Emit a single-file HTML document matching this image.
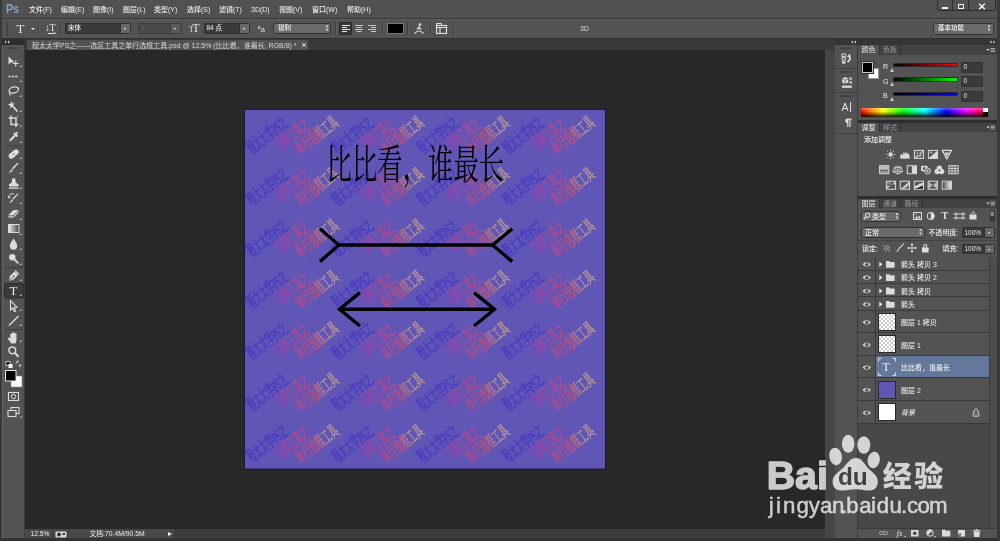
<!DOCTYPE html>
<html lang="zh-CN">
<head>
<meta charset="utf-8">
<title>程太太学PS之——选区工具之单行选框工具.psd</title>
<style>
*{box-sizing:border-box;margin:0;padding:0}
html,body{width:1000px;height:541px;overflow:hidden;background:#282828}
body{position:relative;font-family:"Liberation Sans","Noto Sans CJK SC",sans-serif;font-size:7px;color:#dcdcdc;line-height:1}
.abs{position:absolute}
.t{position:absolute;white-space:nowrap;line-height:1}
/* frame */
#frame{left:0;top:0;width:1000px;height:541px;background:#282828}
#menubar{left:0;top:0;width:1000px;height:19px;background:#515151;border-bottom:1px solid #383838}
#optbar{left:0;top:19px;width:1000px;height:20px;background:#535353;border-top:1px solid #5e5e5e;border-bottom:1px solid #303030}
#tabbar{left:25px;top:39px;width:810px;height:11px;background:#3a3a3a}
#doctab{left:27px;top:40px;width:281px;height:10px;background:#535353}
#toolhead{left:2px;top:39px;width:23px;height:6px;background:#2e2e2e}
#toolbar{left:2px;top:45px;width:23px;height:493px;background:#535353;border-left:1px solid #666;border-right:1px solid #3c3c3c}
#work{left:25px;top:50px;width:800px;height:480px;background:#282828}
#status{left:25px;top:529.3px;width:810px;height:8.7px;background:#484848}
#vscroll{left:824.5px;top:50px;width:10.5px;height:488px;background:#464646}
#bottomedge{left:0;top:538px;width:1000px;height:3px;background:#333}
#leftedge{left:0;top:0;width:2px;height:541px;background:#3a3a3a}
#rightedge{left:997px;top:0;width:3px;height:541px;background:#3a3a3a}
/* right dock */
#dockhead{left:835px;top:39px;width:162px;height:6px;background:#353535}
#iconstrip{left:835px;top:45px;width:23px;height:493px;background:#535353;border-right:1px solid #3a3a3a}
#panels{left:858px;top:45px;width:139px;height:493px;background:#535353}
.ptabs{position:absolute;left:858px;width:139px;height:10px;background:#424242}
.ptab{position:absolute;top:0;height:10px;font-size:7px;line-height:10px;text-align:center;color:#9a9a9a;border-right:1px solid #333}
.ptab.on{background:#535353;color:#e6e6e6}
.field{position:absolute;background:#3a3a3a;border:1px solid #333;border-radius:1px}
#canvas{left:244px;top:109px;width:362px;height:361px;background:#1c1a30}
.mi{top:6.3px;font-size:7px;color:#ececec;font-weight:500}
.sep{position:absolute;top:22px;width:1px;height:13px;background:#404040;border-right:1px solid #5e5e5e;box-sizing:content-box}
.dd{position:absolute;top:23px;height:11px;background:#3a3a3a;border:1px solid #2f2f2f;border-radius:1.5px}
.ddb{position:absolute;top:23px;height:11px;width:11px;background:#686868;border:1px solid #2f2f2f;border-radius:0 1.5px 1.5px 0}
.ddb:after{content:"";position:absolute;left:3.2px;top:4px;border:1.7px solid transparent;border-top:2.2px solid #f0f0f0;border-bottom:0}
.ot{position:absolute;white-space:nowrap;font-size:6.5px;color:#f0f0f0;top:25px;font-weight:500}
.pill{position:absolute;background:#6a6a6a;border:1px solid #333;border-radius:2.5px;height:11px}

.pt{position:absolute;white-space:nowrap;font-size:7px;color:#ececec;line-height:1;font-weight:500}
.gap{position:absolute;left:858px;width:139px;height:3px;background:#2e2e2e}
.lrow{position:absolute;left:858px;width:131px;background:#535353;border-bottom:1px solid #3a3a3a}
.eyecol{position:absolute;left:858px;width:18px;border-right:1px solid #3a3a3a}
.thumb{position:absolute;left:878px;width:18px;height:18px;border:1px solid #2a2a2a}
.chk{background-color:#fff;background-image:linear-gradient(45deg,#ccc 25%,transparent 25%,transparent 75%,#ccc 75%),linear-gradient(45deg,#ccc 25%,transparent 25%,transparent 75%,#ccc 75%);background-size:4px 4px;background-position:0 0,2px 2px}
</style>
</head>
<body>
<div id="root" style="position:absolute;left:0;top:0;width:1000px;height:541px;will-change:transform">
<div id="frame" class="abs"></div>
<div id="work" class="abs"></div>
<div id="menubar" class="abs"></div>
<div id="optbar" class="abs"></div>
<div id="tabbar" class="abs"></div>
<div id="doctab" class="abs"></div>
<div id="toolhead" class="abs"></div>
<div id="toolbar" class="abs"></div>
<div id="status" class="abs"></div>
<div id="dockhead" class="abs"></div>
<div id="iconstrip" class="abs"></div>
<div id="panels" class="abs"></div>
<svg class="abs" style="left:244px;top:109px" width="362" height="361" viewBox="244 109 362 361">
<defs>
<linearGradient id="wg2" gradientUnits="userSpaceOnUse" x1="0" y1="0" x2="60" y2="0"><stop offset="0" stop-color="#8a40b4"/><stop offset="1" stop-color="#c04888"/></linearGradient>
<linearGradient id="wg3" gradientUnits="userSpaceOnUse" x1="0" y1="0" x2="75" y2="0"><stop offset="0" stop-color="#b84a8c"/><stop offset="0.6" stop-color="#c65074"/><stop offset="1" stop-color="#c8a08c"/></linearGradient>
<g id="wmt" font-family="'Liberation Serif','Noto Serif CJK SC',serif" font-size="16.5" opacity="0.85" stroke-width="0.6">
<text transform="translate(7.5,44.5) rotate(-38.5) scale(0.465,1)" fill="#4436c4" stroke="#4436c4">程太太学PS之</text>
<text transform="translate(35.5,41) rotate(-38.5) scale(0.47,1)" fill="url(#wg2)" stroke="url(#wg2)">选择工具之</text>
<text transform="translate(56,45.5) rotate(-38.5) scale(0.5,1)" fill="url(#wg3)" stroke="url(#wg3)">单行选框工具</text>
</g>
<clipPath id="cvclip"><rect x="245" y="110" width="360" height="358.6"/></clipPath>
</defs>
<rect x="244" y="109" width="362" height="361" fill="#1b1838"/>
<rect x="245" y="110" width="360" height="358.6" fill="#6056b6"/>
<g clip-path="url(#cvclip)"><use href="#wmt" x="245.0" y="110.0"/><use href="#wmt" x="330.3" y="110.0"/><use href="#wmt" x="415.6" y="110.0"/><use href="#wmt" x="500.9" y="110.0"/><use href="#wmt" x="245.0" y="161.4"/><use href="#wmt" x="330.3" y="161.4"/><use href="#wmt" x="415.6" y="161.4"/><use href="#wmt" x="500.9" y="161.4"/><use href="#wmt" x="245.0" y="212.8"/><use href="#wmt" x="330.3" y="212.8"/><use href="#wmt" x="415.6" y="212.8"/><use href="#wmt" x="500.9" y="212.8"/><use href="#wmt" x="245.0" y="264.2"/><use href="#wmt" x="330.3" y="264.2"/><use href="#wmt" x="415.6" y="264.2"/><use href="#wmt" x="500.9" y="264.2"/><use href="#wmt" x="245.0" y="315.6"/><use href="#wmt" x="330.3" y="315.6"/><use href="#wmt" x="415.6" y="315.6"/><use href="#wmt" x="500.9" y="315.6"/><use href="#wmt" x="245.0" y="367.0"/><use href="#wmt" x="330.3" y="367.0"/><use href="#wmt" x="415.6" y="367.0"/><use href="#wmt" x="500.9" y="367.0"/><use href="#wmt" x="245.0" y="418.4"/><use href="#wmt" x="330.3" y="418.4"/><use href="#wmt" x="415.6" y="418.4"/><use href="#wmt" x="500.9" y="418.4"/></g>
<text transform="translate(326.6,179) scale(0.619,1)" font-family="'Liberation Serif','Noto Serif CJK SC',serif" font-size="41" fill="#000">比比看，谁最长</text>
<g stroke="#000" stroke-width="3.4" fill="none" stroke-linecap="butt" stroke-linejoin="miter">
<path d="M338.4 245H493"/>
<path d="M320 228.7L338.8 245L320 261.6"/>
<path d="M512.3 228.7L492.6 245L512.3 261.6"/>
<path d="M339.5 309.3H494.5"/>
<path d="M360 292.6L339.5 309.3L360 326"/>
<path d="M474 292.6L494.5 309.3L474 326"/>
</g>
</svg>
<!--CANVAS-->
<div class="t" style="left:6px;top:2.2px;font-size:13px;font-weight:bold;color:#7fa3cf;letter-spacing:0;transform:scaleX(.82);transform-origin:0 0">Ps</div>
<div class="t mi" style="left:29px">文件(F)</div>
<div class="t mi" style="left:61px">编辑(E)</div>
<div class="t mi" style="left:93px">图像(I)</div>
<div class="t mi" style="left:123px">图层(L)</div>
<div class="t mi" style="left:154px">类型(Y)</div>
<div class="t mi" style="left:187px">选择(S)</div>
<div class="t mi" style="left:219px">滤镜(T)</div>
<div class="t mi" style="left:251px">3D(D)</div>
<div class="t mi" style="left:279px">视图(V)</div>
<div class="t mi" style="left:312px">窗口(W)</div>
<div class="t mi" style="left:347px">帮助(H)</div>
<div class="abs" style="left:936.5px;top:-1px;width:59px;height:11.5px;background:#525252;border:1px solid #2c2c2c;border-radius:0 0 2px 2px"></div>
<div class="abs" style="left:952px;top:0;width:1px;height:10px;background:#2c2c2c"></div><div class="abs" style="left:968px;top:0;width:1px;height:10px;background:#2c2c2c"></div>
<div class="abs" style="left:941.5px;top:7px;width:6px;height:1.6px;background:#eee"></div>
<div class="abs" style="left:957.5px;top:3.8px;width:6.4px;height:5px;border:1.2px solid #eee;border-top-width:1.8px"></div>
<svg class="abs" style="left:978px;top:2.5px" width="8" height="7" viewBox="0 0 8 7"><path d="M1.2 0.7L6.8 6.3M6.8 0.7L1.2 6.3" stroke="#f0f0f0" stroke-width="1.5"/></svg>
<!--MENU-->
<div class="abs" style="left:6px;top:22px;width:2px;height:14px;background:#444"></div>
<div class="t" style="left:16.5px;top:21.5px;font-family:'Liberation Serif',serif;font-size:13px;color:#e4e4e4">T</div>
<div class="abs" style="left:31px;top:28px;border:2px solid transparent;border-top:2.5px solid #e8e8e8;border-bottom:0"></div>
<div class="sep" style="left:38px"></div>
<div class="t" style="left:45px;top:23px;font-family:'Liberation Serif',serif;font-size:10px;color:#e4e4e4;letter-spacing:-0.5px">↓T</div>
<div class="abs" style="left:48px;top:33px;width:7px;height:1px;background:#ddd"></div>
<div class="abs" style="left:54px;top:32px;border:1.5px solid transparent;border-left:2px solid #ddd;border-right:0"></div>
<div class="sep" style="left:60px"></div>
<div class="dd" style="left:65px;width:56px"></div><div class="ddb" style="left:120px"></div>
<div class="ot" style="left:68px">宋体</div>
<div class="dd" style="left:138px;width:33px;background:#4a4a4a;border-color:#3c3c3c"></div><div class="ddb" style="left:170px;background:#5c5c5c;border-color:#3c3c3c"></div>
<div class="ot" style="left:142px;color:#999">-</div>
<div class="t" style="left:189px;top:22.5px;font-family:'Liberation Serif',serif;font-size:11.5px;color:#e4e4e4;letter-spacing:-1.2px"><span style="font-size:7.5px">T</span>T</div>
<div class="dd" style="left:204px;width:36px"></div><div class="ddb" style="left:239px"></div>
<div class="ot" style="left:206.5px">84 点</div>
<div class="t" style="left:257.5px;top:24.5px;font-size:8px;color:#ddd"><span style="font-size:5.5px;vertical-align:2.5px">a</span>a</div>
<div class="pill" style="left:273px;top:23px;width:58px"></div>
<div class="ot" style="left:278px">锐利</div>
<div class="t" style="left:325px;top:24px;font-size:4px;color:#eee;line-height:4px">▲<br>▼</div>
<div class="sep" style="left:335px"></div>
<div class="abs" style="left:339px;top:22px;width:13px;height:13px;background:#383838;border:1px solid #2a2a2a;border-radius:1px"></div>
<svg class="abs" style="left:340px;top:23px" width="40" height="11" viewBox="0 0 40 11"><g stroke="#e0e0e0" stroke-width="1"><path d="M2 2.5H10M2 4.5H7M2 6.5H10M2 8.5H7"/><g stroke="#c8c8c8"><path d="M15 2.5H23M16.5 4.5H21.5M15 6.5H23M16.5 8.5H21.5"/><path d="M28 2.5H36M31 4.5H36M28 6.5H36M31 8.5H36"/></g></g></svg>
<div class="sep" style="left:382px"></div>
<div class="abs" style="left:387px;top:23px;width:17px;height:11px;background:#000;border:1px solid #777"></div>
<div class="sep" style="left:407px"></div>
<svg class="abs" style="left:413px;top:22px" width="12" height="13" viewBox="0 0 12 13"><path d="M1.5 11.5Q6 6.5 10.5 11.5" stroke="#ddd" fill="none" stroke-width="1.2"/><path d="M4 8L6 4L8 8M5 6.5H7.5" stroke="#ddd" fill="none" stroke-width="1"/><circle cx="7" cy="2.5" r="1.3" fill="#ddd"/></svg>
<div class="sep" style="left:430px"></div>
<svg class="abs" style="left:436px;top:23px" width="12" height="11" viewBox="0 0 12 11"><path d="M0.5 2.5V0.5H5.5V2.5" stroke="#ddd" fill="none"/><rect x="0.5" y="2.5" width="10" height="8" fill="none" stroke="#ddd" stroke-width="1.2"/><path d="M1 4.5H10.5M4 4.5V10" stroke="#ddd" stroke-width="1.2"/></svg>
<div class="sep" style="left:453px"></div>
<div class="t" style="left:580px;top:25px;font-size:7px;color:#ddd">3D</div>
<div class="pill" style="left:933px;top:23px;width:60.8px;height:11.6px"></div>
<div class="ot" style="left:938px">基本功能</div>
<div class="t" style="left:987px;top:24px;font-size:4px;color:#eee;line-height:4px">▲<br>▼</div>
<!--OPTIONS-->
<div class="t" style="left:32px;top:41.5px;font-size:7px;color:#d4d4d4">程太太学PS之——选区工具之单行选框工具.psd @ 12.5% (比比看，谁最长, RGB/8) *</div>
<svg class="abs" style="left:301px;top:42px" width="6" height="6" viewBox="0 0 6 6"><path d="M1 1L5 5M5 1L1 5" stroke="#ddd" stroke-width="1"/></svg>
<svg class="abs" style="left:0;top:0" width="26" height="541" viewBox="0 0 26 541">
<path d="M5 40.5L7 42L5 43.5ZM8 40.5L10 42L8 43.5Z" fill="#ccc"/>
<rect x="8" y="47.5" width="11" height="1.2" fill="#3c3c3c"/>
<g fill="#dcdcdc" stroke="none">
<!-- move -->
<path d="M8.5 56.5L8.5 64.5L10.6 62.6L14.5 62.2Z"/>
<path d="M15.7 60.5V66.5M12.7 63.5H18.7" stroke="#dcdcdc" stroke-width="1.2" fill="none"/>
<!-- marquee -->
<path d="M8.5 76.5H18.5" stroke="#dcdcdc" stroke-width="1.6" stroke-dasharray="2.2 1.2" fill="none"/>
<!-- lasso -->
<ellipse cx="13.8" cy="90" rx="4.8" ry="3" fill="none" stroke="#dcdcdc" stroke-width="1.3" transform="rotate(-15 13.8 90)"/>
<path d="M10 92.5Q9 94 10.5 95.5" stroke="#dcdcdc" stroke-width="1.1" fill="none"/>
<!-- wand -->
<path d="M12 105.5L17.5 111.5" stroke="#dcdcdc" stroke-width="1.8"/>
<path d="M11.5 101L12.3 103.6L15 103.2L13 105L14.5 107.5L12 106.3L10.2 108.5L10.2 105.8L7.8 104.6L10.4 103.8Z"/>
<!-- crop -->
<path d="M11 115.5V124.5H18.5M8.5 118H16V127" stroke="#dcdcdc" stroke-width="1.5" fill="none"/>
<path d="M16.5 117.5L18.5 115.5" stroke="#dcdcdc" stroke-width="0.8"/>
<!-- eyedropper -->
<path d="M9 141.5L10 139L14.5 134.5L16 136L11.5 140.5Z"/>
<path d="M14 133L17.5 136.5M15.5 134.5L17.5 132.2" stroke="#dcdcdc" stroke-width="1.8"/>
<!-- sep -->
<rect x="5" y="145.5" width="18" height="1" fill="#3e3e3e"/>
<!-- healing -->
<rect x="8" y="151.3" width="11.5" height="5.4" rx="2.7" transform="rotate(-40 13.7 154)"/>
<circle cx="13.7" cy="154" r="0.7" fill="#535353"/>
<!-- brush -->
<path d="M18.5 163.5L13 169.5L11.8 168.3L17.5 162.8Z"/>
<path d="M11.5 169L12.8 170.3Q11.5 173 8.5 173Q10.5 171.5 11.5 169Z"/>
<!-- stamp -->
<path d="M12 178.5H15.5V182L17.5 184H18.5V186.5H9V184H10L12 182Z"/>
<rect x="9" y="187.5" width="9.5" height="1.3"/>
<!-- history brush -->
<path d="M18.5 194L13.5 199.5L12.5 198.5L17.8 193.3Z"/>
<path d="M12 199L13.2 200.2Q12 203 9 203Q11 201.5 12 199Z"/>
<path d="M9 197.5A3.2 3.2 0 0 1 14 194.3" stroke="#dcdcdc" stroke-width="1" fill="none"/>
<path d="M7.6 196.5L9 198.8L10.6 196.7Z"/>
<!-- eraser -->
<path d="M8.5 215L13.5 210H18.5L13.5 215Z"/>
<path d="M8.5 215.6H13.5V217.8H8.5ZM14 215.3L18.7 210.6V212.8L14 217.6Z" fill="#bdbdbd"/>
<!-- gradient -->
<rect x="8.5" y="224.5" width="10.5" height="8" fill="url(#tg)" stroke="#dcdcdc" stroke-width="1"/>
<!-- blur drop -->
<path d="M13.5 238.5Q17.5 244 17.2 246A3.7 3.7 0 0 1 9.8 246Q9.5 244 13.5 238.5Z"/>
<!-- dodge -->
<circle cx="12.3" cy="257.3" r="3.2"/>
<path d="M14.5 259.5L18.3 263.3" stroke="#dcdcdc" stroke-width="1.8"/>
<rect x="5" y="267" width="18" height="1" fill="#3e3e3e"/>
<!-- pen -->
<path d="M9 281L10 276L14.5 271.5L18 275L13.5 279.5Z"/>
<path d="M9.3 280.7L13.3 276.7" stroke="#535353" stroke-width="0.8"/>
<circle cx="13.6" cy="276.2" r="0.9" fill="#535353"/>
<path d="M15 270.5L19 274.5" stroke="#dcdcdc" stroke-width="1.3"/>
<!-- type active -->
<rect x="4.5" y="283.5" width="19" height="14.5" rx="1.5" fill="#3a3a3a" stroke="#2c2c2c" stroke-width="1"/>
<!-- path select -->
<path d="M10.5 300.5V310L12.7 308L14.3 311.5L15.7 310.9L14.2 307.5L17 307.3Z" fill="none" stroke="#dcdcdc" stroke-width="1.1"/>
<!-- line -->
<path d="M9 325.5L18.5 316" stroke="#dcdcdc" stroke-width="1.4"/>
<rect x="5" y="329" width="18" height="1" fill="#3e3e3e"/>
<!-- hand -->
<path d="M10.2 338V334.5Q10.2 333.6 11 333.6Q11.7 333.6 11.7 334.5V333.4Q11.7 332.5 12.5 332.5Q13.3 332.5 13.3 333.4V333Q13.3 332.2 14.1 332.2Q14.9 332.2 14.9 333.2V334Q14.9 333.2 15.7 333.2Q16.5 333.2 16.5 334.2V339Q16.5 341.5 15.5 343.5H11Q10.5 342 9 340.5L7.8 338.6Q7.5 337.6 8.4 337.4Q9.2 337.3 10.2 338.6Z"/>
<!-- zoom -->
<circle cx="12.3" cy="350.3" r="3.4" fill="none" stroke="#dcdcdc" stroke-width="1.5"/>
<path d="M14.8 352.8L18.5 356.7" stroke="#dcdcdc" stroke-width="2"/>
<!-- default colors / swap -->
<rect x="6" y="361.5" width="4" height="4" fill="#111" stroke="#dcdcdc" stroke-width="0.8"/>
<rect x="8.5" y="364" width="4" height="4" fill="#fff"/>
<path d="M16 363.5Q16 361.5 18.5 361.5M18.5 361.5L17.3 360.3M18.5 361.5L17.3 362.7M20 364V366.5M20 366.5L19 365.3M20 366.5L21 365.3" stroke="#dcdcdc" stroke-width="0.9" fill="none"/>
<!-- fg/bg -->
<rect x="11" y="376" width="11" height="11" fill="#fff" stroke="#888" stroke-width="0.6"/>
<rect x="5.5" y="370.5" width="10.5" height="10.5" fill="#000" stroke="#e8e8e8" stroke-width="1"/>
<!-- quick mask -->
<rect x="8.5" y="392.5" width="10" height="8" fill="none" stroke="#dcdcdc" stroke-width="1.1"/>
<circle cx="13.5" cy="396.5" r="2.2" fill="none" stroke="#dcdcdc" stroke-width="1"/>
<!-- screen mode -->
<rect x="11" y="407.5" width="8" height="6" fill="none" stroke="#dcdcdc" stroke-width="1.1"/>
<rect x="8" y="410.5" width="8" height="6" fill="#535353" stroke="#dcdcdc" stroke-width="1.1"/>
</g>
<g fill="#cfcfcf"><path d="M21.5 67V65L19.5 67Z"/><path d="M21.5 82V80L19.5 82Z"/><path d="M21.5 97V95L19.5 97Z"/><path d="M21.5 112V110L19.5 112Z"/><path d="M21.5 127V125L19.5 127Z"/><path d="M21.5 143V141L19.5 143Z"/><path d="M21.5 159V157L19.5 159Z"/><path d="M21.5 174V172L19.5 174Z"/><path d="M21.5 189V187L19.5 189Z"/><path d="M21.5 204V202L19.5 204Z"/><path d="M21.5 220V218L19.5 220Z"/><path d="M21.5 235V233L19.5 235Z"/><path d="M21.5 250V248L19.5 250Z"/><path d="M21.5 265V263L19.5 265Z"/><path d="M21.5 281V279L19.5 281Z"/><path d="M21.5 296V294L19.5 296Z"/><path d="M21.5 311V309L19.5 311Z"/><path d="M21.5 326V324L19.5 326Z"/><path d="M21.5 342V340L19.5 342Z"/><path d="M21.5 418V416L19.5 418Z"/></g>
<defs><linearGradient id="tg" x1="0" y1="0" x2="1" y2="0"><stop offset="0" stop-color="#eee"/><stop offset="1" stop-color="#444"/></linearGradient></defs>
</svg>
<div class="t" style="left:9.5px;top:284px;font-family:'Liberation Serif',serif;font-size:13px;color:#e6e6e6">T</div>
<!--TOOLS-->
<svg class="abs" style="left:835px;top:39px" width="162" height="6" viewBox="835 39 162 6"><path d="M853 40.5L851 42L853 43.5ZM856 40.5L854 42L856 43.5ZM990.3 40.5L992.3 42L990.3 43.5ZM993.3 40.5L995.3 42L993.3 43.5Z" fill="#ccc"/></svg>
<!-- icon strip -->
<svg class="abs" style="left:835px;top:45px" width="23" height="100" viewBox="835 45 23 100">
<g fill="#dcdcdc">
<rect x="840" y="47.5" width="12" height="1.2" fill="#3c3c3c"/>
<rect x="842" y="54" width="3.4" height="2.4" fill="none" stroke="#dcdcdc" stroke-width="0.9"/><rect x="842" y="57.6" width="3.4" height="2.4" fill="none" stroke="#dcdcdc" stroke-width="0.9"/><rect x="842" y="61.2" width="3.4" height="2.4"/>
<path d="M847.5 62Q852 59 848.5 55.5" fill="none" stroke="#dcdcdc" stroke-width="1.8"/><path d="M846.5 56.5L850.5 53.8L850 57.5Z"/>
<rect x="835" y="68" width="22" height="1" fill="#3e3e3e"/>
<rect x="840" y="71.5" width="12" height="1.2" fill="#3c3c3c"/>
<path d="M845.2 77L848.3 78.5V82.5L845.2 84L842.2 82.5V78.5Z"/><path d="M845.2 80.2V84M842.4 78.7L845.2 80.2L848.1 78.7" stroke="#535353" stroke-width="0.7" fill="none"/>
<rect x="849.6" y="77.5" width="2.2" height="2.2"/><rect x="849.6" y="81.3" width="2.2" height="2.2"/><rect x="842" y="85.6" width="9.8" height="2.2"/>
<rect x="835" y="92" width="22" height="1" fill="#3e3e3e"/>
<rect x="840" y="95.5" width="12" height="1.2" fill="#3c3c3c"/>
<rect x="835" y="133" width="22" height="1" fill="#3e3e3e"/>
<path d="M847 118.5H851.5V119.8H850.6V127H849.4V119.8H848.4V127H847.2V123.2A2.4 2.4 0 0 1 847 118.5Z"/>
</g></svg>
<div class="t" style="left:841.5px;top:102px;font-size:10.5px;color:#e4e4e4">A</div>
<div class="abs" style="left:849.5px;top:102px;width:1px;height:10px;background:#ddd"></div>
<div class="ptabs" style="top:45px"><div class="ptab on" style="left:0;width:22px">颜色</div><div class="ptab" style="left:22px;width:21px">色板</div></div>
<div class="abs" style="left:867.5px;top:68px;width:11px;height:11px;background:#fff;border:1px solid #999"></div>
<div class="abs" style="left:861.5px;top:62px;width:11px;height:11px;background:#000;border:1px solid #c8c8c8;outline:1px solid #333"></div>
<div class="pt" style="left:883px;top:63.0px;font-size:7px">R</div>
<div class="abs" style="left:892.5px;top:62.5px;width:65.5px;height:4.5px;background:linear-gradient(90deg,#000,#f00);border:1px solid #2a2a2a;border-radius:1px"></div>
<div class="abs" style="left:890.5px;top:68.0px;border:2.8px solid transparent;border-bottom:4px solid #c8c8c8;border-top:0;margin-left:-0.3px;margin-top:-0.5px"></div>
<div class="field" style="left:961px;top:61.5px;width:22px;height:11px"></div>
<div class="pt" style="left:963.5px;top:63.5px;font-size:6.5px">0</div>
<div class="pt" style="left:883px;top:77.5px;font-size:7px">G</div>
<div class="abs" style="left:892.5px;top:77px;width:65.5px;height:4.5px;background:linear-gradient(90deg,#000,#0f0);border:1px solid #2a2a2a;border-radius:1px"></div>
<div class="abs" style="left:890.5px;top:82.5px;border:2.8px solid transparent;border-bottom:4px solid #c8c8c8;border-top:0;margin-left:-0.3px;margin-top:-0.5px"></div>
<div class="field" style="left:961px;top:76px;width:22px;height:11px"></div>
<div class="pt" style="left:963.5px;top:78px;font-size:6.5px">0</div>
<div class="pt" style="left:883px;top:92.0px;font-size:7px">B</div>
<div class="abs" style="left:892.5px;top:91.5px;width:65.5px;height:4.5px;background:linear-gradient(90deg,#000,#00f);border:1px solid #2a2a2a;border-radius:1px"></div>
<div class="abs" style="left:890.5px;top:97.0px;border:2.8px solid transparent;border-bottom:4px solid #c8c8c8;border-top:0;margin-left:-0.3px;margin-top:-0.5px"></div>
<div class="field" style="left:961px;top:90.5px;width:22px;height:11px"></div>
<div class="pt" style="left:963.5px;top:92.5px;font-size:6.5px">0</div>
<div class="abs" style="left:861px;top:108px;width:126.5px;height:8.5px;background:linear-gradient(180deg,rgba(255,255,255,.35) 0,rgba(255,255,255,0) 35%,rgba(0,0,0,0) 40%,rgba(0,0,0,.9) 100%),linear-gradient(90deg,#f00 0,#ff0 17%,#0f0 33%,#0ff 50%,#00f 67%,#f0f 83%,#f00 100%)"></div>
<div class="abs" style="left:982.5px;top:108px;width:5px;height:4.3px;background:#fff"></div><div class="abs" style="left:982.5px;top:112.3px;width:5px;height:4.2px;background:#000"></div>
<div class="gap" style="top:120px"></div>
<div class="ptabs" style="top:123px;height:9px"><div class="ptab on" style="left:0;width:22px;height:9px;line-height:9px">调整</div><div class="ptab" style="left:22px;width:21px;height:9px;line-height:9px">样式</div></div>
<div class="pt" style="left:864px;top:136px;font-size:7px">添加调整</div>
<div class="gap" style="top:196px"></div>
<div class="ptabs" style="top:199px;height:9px"><div class="ptab on" style="left:0;width:22px;height:9px;line-height:9px">图层</div><div class="ptab" style="left:22px;width:21px;height:9px;line-height:9px">通道</div><div class="ptab" style="left:43px;width:22px;height:9px;line-height:9px">路径</div></div>
<svg class="abs" style="left:858px;top:45px" width="139" height="170" viewBox="858 45 139 170"><path d="M986.5 49H989.5L988 51Z" fill="#ddd"/><path d="M990.5 48.5H995M990.5 50H995M990.5 51.5H995" stroke="#bbb" stroke-width="0.8"/><path d="M986.5 126.5H989.5L988 128.5Z" fill="#ddd"/><path d="M990.5 126.0H995M990.5 127.5H995M990.5 129.0H995" stroke="#bbb" stroke-width="0.8"/><path d="M986.5 202.5H989.5L988 204.5Z" fill="#ddd"/><path d="M990.5 202.0H995M990.5 203.5H995M990.5 205.0H995" stroke="#bbb" stroke-width="0.8"/></svg>
<svg class="abs" style="left:858px;top:145px" width="139" height="50" viewBox="858 145 139 50"><defs><linearGradient id="gm" x1="0" y1="0" x2="1" y2="0"><stop offset="0" stop-color="#555"/><stop offset="1" stop-color="#eee"/></linearGradient></defs><circle cx="890.6" cy="154.4" r="2.2" fill="#dcdcdc"/><path d="M893.8 154.4L895.4 154.4" stroke="#dcdcdc" stroke-width="0.9"/><path d="M892.9 156.7L894.0 157.8" stroke="#dcdcdc" stroke-width="0.9"/><path d="M890.6 157.6L890.6 159.2" stroke="#dcdcdc" stroke-width="0.9"/><path d="M888.3 156.7L887.2 157.8" stroke="#dcdcdc" stroke-width="0.9"/><path d="M887.4 154.4L885.8 154.4" stroke="#dcdcdc" stroke-width="0.9"/><path d="M888.3 152.1L887.2 151.0" stroke="#dcdcdc" stroke-width="0.9"/><path d="M890.6 151.2L890.6 149.6" stroke="#dcdcdc" stroke-width="0.9"/><path d="M892.9 152.1L894.0 151.0" stroke="#dcdcdc" stroke-width="0.9"/><path d="M900.3 157.9V155.4L901.8 153.4L902.8 155.4L903.8 151.4L904.8 154.4L905.8 150.9L906.8 154.4L907.8 152.4L909.5 155.4V157.9Z" fill="#dcdcdc"/><rect x="900.3" y="157.4" width="9.2" height="1.2" fill="#dcdcdc"/><rect x="914.4" y="150.4" width="9.2" height="8" fill="none" stroke="#dcdcdc" stroke-width="1"/><path d="M914.9 157.9Q919.4 157.4 923.1 150.9" fill="none" stroke="#dcdcdc" stroke-width="1"/><path d="M917.4 150.4V158.4M920.4 150.4V158.4M914.4 153.1H923.4M914.4 155.70000000000002H923.4" stroke="#dcdcdc" stroke-width="0.4"/><rect x="928.4" y="150.4" width="9.2" height="8" fill="none" stroke="#dcdcdc" stroke-width="1"/><path d="M928.9 157.9L937.1 150.9V157.9Z" fill="#dcdcdc"/><path d="M929.9 152.4H932.4M931.1 151.20000000000002V153.6" stroke="#dcdcdc" stroke-width="0.7"/><path d="M942.1999999999999 150.4H951.4L946.8 158.9Z" fill="none" stroke="#dcdcdc" stroke-width="1.2"/><path d="M944.4999999999999 152.4H949.0999999999999L946.8 156.4Z" fill="#dcdcdc"/><rect x="879.6" y="165.7" width="9.2" height="8" fill="none" stroke="#dcdcdc" stroke-width="1"/><rect x="880.1" y="166.2" width="8.2" height="3.5" fill="#dcdcdc" opacity=".8"/><rect x="880.1" y="170.7" width="8.2" height="2.5" fill="#dcdcdc" opacity=".5"/><path d="M897.8 165.7V173.2M894.1999999999999 167.2H901.4M895.6999999999999 173.7H899.9" stroke="#dcdcdc" stroke-width="1"/><path d="M894.6999999999999 167.2L892.9 171.7H896.4999999999999Z M900.9 167.2L899.0999999999999 171.7H902.6999999999999Z" fill="none" stroke="#dcdcdc" stroke-width="0.8"/><path d="M892.9 171.7Q894.6999999999999 173.7 896.4999999999999 171.7ZM899.0999999999999 171.7Q900.9 173.7 902.6999999999999 171.7Z" fill="#dcdcdc"/><rect x="907.3" y="165.7" width="9.2" height="8" fill="none" stroke="#dcdcdc" stroke-width="1"/><rect x="911.9" y="166.2" width="4.1" height="7" fill="#dcdcdc"/><rect x="921.1" y="165.7" width="6.5" height="5.5" rx="0.8" fill="#dcdcdc"/><circle cx="924.3000000000001" cy="168.6" r="1.5" fill="#535353"/><circle cx="927.6" cy="171.0" r="2.9" fill="#535353" stroke="#dcdcdc" stroke-width="1"/><circle cx="927.6" cy="171.0" r="1.2" fill="#dcdcdc"/><circle cx="939.4" cy="168.1" r="2.7" fill="#dcdcdc"/><circle cx="937.1999999999999" cy="171.5" r="2.7" fill="#dcdcdc"/><circle cx="941.6" cy="171.5" r="2.7" fill="#dcdcdc"/><circle cx="939.4" cy="170.29999999999998" r="1" fill="#535353"/><rect x="948.9" y="165.7" width="9.2" height="8" fill="none" stroke="#dcdcdc" stroke-width="1"/><path d="M952.0 165.7V173.7M955.0 165.7V173.7M948.9 168.39999999999998H958.1M948.9 171.0H958.1" stroke="#dcdcdc" stroke-width="0.9"/><rect x="886.4" y="181.2" width="9.2" height="8" fill="none" stroke="#dcdcdc" stroke-width="1"/><path d="M886.9 188.7V186.2Q889.4 186.2 891.0 185.2T895.1 181.7V184.2Q892.4 184.2 891.0 185.2T886.9 188.7Z" fill="#dcdcdc"/><rect x="886.9" y="181.7" width="4" height="3" fill="#dcdcdc" opacity=".35"/><rect x="900.3" y="181.2" width="9.2" height="8" fill="none" stroke="#dcdcdc" stroke-width="1"/><path d="M900.8 188.7L909.0 181.7V185.2L904.3 188.7Z" fill="#dcdcdc" opacity=".85"/><rect x="914.3" y="181.2" width="9.2" height="8" fill="none" stroke="#dcdcdc" stroke-width="1"/><path d="M914.8 188.7V186.2L917.3 185.2L919.3 183.7L923.0 182.7V185.2L920.3 186.2L918.3 187.7Z" fill="#dcdcdc"/><path d="M914.8 188.7H923.0V186.2Z" fill="#222"/><rect x="928.1999999999999" y="181.2" width="9.2" height="8" fill="none" stroke="#dcdcdc" stroke-width="1"/><path d="M928.6999999999999 181.7L932.8 185.2L928.6999999999999 188.7ZM936.9 181.7L932.8 185.2L936.9 188.7Z" fill="#dcdcdc" opacity=".75"/><rect x="942.1999999999999" y="181.2" width="9.2" height="8" fill="none" stroke="#dcdcdc" stroke-width="1"/><rect x="942.6999999999999" y="181.7" width="8.2" height="7" fill="url(#gm)"/></svg>
<div class="pill" style="left:861px;top:210.5px;width:40px;height:11px"></div>
<svg class="abs" style="left:863px;top:212px" width="8" height="8" viewBox="0 0 8 8"><circle cx="4.6" cy="3.2" r="2.2" fill="none" stroke="#eee" stroke-width="1"/><path d="M3 4.8L0.8 7.2" stroke="#eee" stroke-width="1.2"/></svg>
<div class="pt" style="left:872px;top:212.5px;font-size:7px">类型</div>
<div class="t" style="left:895px;top:211.5px;font-size:4px;color:#eee;line-height:4px">▲<br>▼</div>
<div class="pill" style="left:861px;top:227px;width:63.5px;height:10.5px"></div>
<div class="pt" style="left:865px;top:228.5px;font-size:7px">正常</div>
<div class="t" style="left:918.5px;top:228px;font-size:4px;color:#eee;line-height:4px">▲<br>▼</div>
<div class="pt" style="left:928.5px;top:228.5px;font-size:7px">不透明度:</div>
<div class="field" style="left:962px;top:227px;width:22px;height:10.5px"></div>
<div class="pt" style="left:964.5px;top:229.8px;font-size:6.5px">100%</div>
<div class="ddb" style="left:983.5px;top:227px;height:10.5px;width:11px"></div>
<div class="abs" style="left:858px;top:240px;width:139px;height:1px;background:#434343"></div>
<div class="pt" style="left:862px;top:245px;font-size:7px">锁定:</div>
<div class="pt" style="left:942.5px;top:245px;font-size:7px">填充:</div>
<div class="field" style="left:962px;top:243.5px;width:22px;height:10.5px"></div>
<div class="pt" style="left:964.5px;top:246px;font-size:6.5px">100%</div>
<div class="ddb" style="left:983.5px;top:243.5px;height:10.5px;width:11px"></div>
<svg class="abs" style="left:858px;top:208px" width="139" height="48" viewBox="858 208 139 48"><g fill="#dcdcdc">
<rect x="913.5" y="212.5" width="8" height="7" fill="none" stroke="#dcdcdc" stroke-width="1"/><path d="M914.5 218.5L916.5 216L918 217.5L919.5 215.5L920.5 218.5Z"/><circle cx="916" cy="214.5" r="0.7"/>
<circle cx="930.7" cy="216" r="3.6" fill="none" stroke="#dcdcdc" stroke-width="1"/><path d="M930.7 212.4A3.6 3.6 0 0 1 930.7 219.6Z"/>
<path d="M959 212.5V219.5M966 212.5V219.5M956.5 214H968.5M956.5 218H968.5" transform="translate(-3,0)" stroke="#dcdcdc" stroke-width="1" fill="none"/>
<path d="M969.5 219.5V214.5H971.5V213A1.8 1.8 0 0 1 975 213V214.5H976.5V219.5Z"/><rect x="972.3" y="212.3" width="2" height="2.4" fill="#535353"/>
<rect x="990" y="211.5" width="4.5" height="9.5" rx="1" fill="#3a3a3a" stroke="#2c2c2c" stroke-width="0.6"/><rect x="990.6" y="212" width="3.3" height="4" fill="#8a8a8a"/>
<g fill="#9a9a9a"><rect x="883.5" y="245" width="1.6" height="1.6"/><rect x="886.7" y="245" width="1.6" height="1.6"/><rect x="885.1" y="246.6" width="1.6" height="1.6"/><rect x="888.3" y="246.6" width="1.6" height="1.6"/><rect x="883.5" y="248.2" width="1.6" height="1.6"/><rect x="886.7" y="248.2" width="1.6" height="1.6"/><rect x="885.1" y="249.8" width="1.6" height="1.6"/><rect x="888.3" y="249.8" width="1.6" height="1.6"/></g>
<path d="M904.5 243.5L899.5 249L898.6 248.2L903.8 243Z"/><path d="M898.3 248.6L899.3 249.6Q898.3 251.8 896 252Q897.6 250.6 898.3 248.6Z"/>
<path d="M912 244V252M908 248H916" stroke="#dcdcdc" stroke-width="1" fill="none"/><path d="M912 243L913.5 245H910.5ZM912 253L913.5 251H910.5ZM907 248L909 246.5V249.5ZM917 248L915 246.5V249.5Z"/>
<path d="M922 252.5V247.5H923.3V246A2 2 0 0 1 927.3 246V247.5H928.6V252.5Z"/><rect x="924.4" y="245.2" width="1.8" height="2.4" fill="#535353"/>
</g></svg>
<div class="t" style="left:941.5px;top:211px;font-family:'Liberation Serif',serif;font-weight:bold;font-size:10px;color:#e2e2e2">T</div>
<div class="abs" style="left:858px;top:256.5px;width:131px;height:271.5px;background:#484848;border-top:1px solid #3a3a3a"></div>
<div class="abs" style="left:989px;top:256.5px;width:8px;height:271.5px;background:#4d4d4d;border-left:1px solid #3c3c3c"></div>
<div class="lrow" style="top:257.2px;height:13.35px;background:#535353"></div><div class="eyecol" style="top:257.2px;height:12.35px;background:#535353"></div>
<div class="pt" style="left:901px;top:260.9px">箭头 拷贝 3</div>
<div class="lrow" style="top:270.55px;height:13.35px;background:#535353"></div><div class="eyecol" style="top:270.55px;height:12.35px;background:#535353"></div>
<div class="pt" style="left:901px;top:274.2px">箭头 拷贝 2</div>
<div class="lrow" style="top:283.9px;height:13.35px;background:#535353"></div><div class="eyecol" style="top:283.9px;height:12.35px;background:#535353"></div>
<div class="pt" style="left:901px;top:287.6px">箭头 拷贝</div>
<div class="lrow" style="top:297.25px;height:13.35px;background:#535353"></div><div class="eyecol" style="top:297.25px;height:12.35px;background:#535353"></div>
<div class="pt" style="left:901px;top:300.9px">箭头</div>
<div class="lrow" style="top:310.6px;height:22.60px;background:#535353"></div><div class="eyecol" style="top:310.6px;height:21.60px;background:#535353"></div>
<div class="thumb chk" style="top:312.7px"></div><div class="pt" style="left:901px;top:318.9px;font-size:7px">图层 1 拷贝</div>
<div class="lrow" style="top:333.2px;height:22.60px;background:#535353"></div><div class="eyecol" style="top:333.2px;height:21.60px;background:#535353"></div>
<div class="thumb chk" style="top:335.3px"></div><div class="pt" style="left:901px;top:341.5px;font-size:7px">图层 1</div>
<div class="lrow" style="top:355.8px;height:22.60px;background:#63789a"></div><div class="eyecol" style="top:355.8px;height:21.60px;background:#535353"></div>
<div class="t" style="left:882.5px;top:361.4px;font-family:'Liberation Serif',serif;font-size:12px;color:#f0f0f0">T</div><div class="pt" style="left:901px;top:364.1px;font-size:7px">比比看，谁最长</div>
<div class="lrow" style="top:378.4px;height:22.60px;background:#535353"></div><div class="eyecol" style="top:378.4px;height:21.60px;background:#535353"></div>
<div class="thumb" style="top:380.5px;background:#6056b6"></div><div class="pt" style="left:901px;top:386.7px;font-size:7px">图层 2</div>
<div class="lrow" style="top:401.0px;height:22.60px;background:#535353"></div><div class="eyecol" style="top:401.0px;height:21.60px;background:#535353"></div>
<div class="thumb" style="top:403.1px;background:#fff"></div><div class="pt" style="left:901px;top:409.3px;font-style:italic;font-size:7px">背景</div>
<svg class="abs" style="left:858px;top:256px" width="139" height="170" viewBox="858 256 139 170"><g fill="#dcdcdc"><path d="M862.5 264.3Q866.7 259.7 870.9000000000001 264.3Q866.7 268.7 862.5 264.3Z" fill="#dcdcdc"/><circle cx="866.7" cy="264.1" r="1.9" fill="#484848"/><circle cx="866.1" cy="263.40000000000003" r="0.7" fill="#eee"/><path d="M879.3 261.7L882.3 264.3L879.3 266.90000000000003Z" fill="#eee"/><path d="M886 260.90000000000003H889.2L890 261.90000000000003H894.6V267.7H886Z"/><path d="M862.5 277.6Q866.7 273.0 870.9000000000001 277.6Q866.7 282.0 862.5 277.6Z" fill="#dcdcdc"/><circle cx="866.7" cy="277.40000000000003" r="1.9" fill="#484848"/><circle cx="866.1" cy="276.70000000000005" r="0.7" fill="#eee"/><path d="M879.3 275.0L882.3 277.6L879.3 280.20000000000005Z" fill="#eee"/><path d="M886 274.20000000000005H889.2L890 275.20000000000005H894.6V281.0H886Z"/><path d="M862.5 291.0Q866.7 286.4 870.9000000000001 291.0Q866.7 295.4 862.5 291.0Z" fill="#dcdcdc"/><circle cx="866.7" cy="290.8" r="1.9" fill="#484848"/><circle cx="866.1" cy="290.1" r="0.7" fill="#eee"/><path d="M879.3 288.4L882.3 291.0L879.3 293.6Z" fill="#eee"/><path d="M886 287.6H889.2L890 288.6H894.6V294.4H886Z"/><path d="M862.5 304.3Q866.7 299.7 870.9000000000001 304.3Q866.7 308.7 862.5 304.3Z" fill="#dcdcdc"/><circle cx="866.7" cy="304.1" r="1.9" fill="#484848"/><circle cx="866.1" cy="303.40000000000003" r="0.7" fill="#eee"/><path d="M879.3 301.7L882.3 304.3L879.3 306.90000000000003Z" fill="#eee"/><path d="M886 300.90000000000003H889.2L890 301.90000000000003H894.6V307.7H886Z"/><path d="M862.5 322.3Q866.7 317.7 870.9000000000001 322.3Q866.7 326.7 862.5 322.3Z" fill="#dcdcdc"/><circle cx="866.7" cy="322.1" r="1.9" fill="#484848"/><circle cx="866.1" cy="321.40000000000003" r="0.7" fill="#eee"/><path d="M862.5 344.9Q866.7 340.29999999999995 870.9000000000001 344.9Q866.7 349.29999999999995 862.5 344.9Z" fill="#dcdcdc"/><circle cx="866.7" cy="344.7" r="1.9" fill="#484848"/><circle cx="866.1" cy="344.0" r="0.7" fill="#eee"/><path d="M862.5 367.5Q866.7 362.9 870.9000000000001 367.5Q866.7 371.9 862.5 367.5Z" fill="#dcdcdc"/><circle cx="866.7" cy="367.3" r="1.9" fill="#484848"/><circle cx="866.1" cy="366.6" r="0.7" fill="#eee"/><path d="M878.5 361.4V358.4H881.5M892.5 358.4H895.5V361.4M895.5 372.4V375.4H892.5M881.5 375.4H878.5V372.4" fill="none" stroke="#e8e8e8" stroke-width="1"/><path d="M862.5 390.1Q866.7 385.5 870.9000000000001 390.1Q866.7 394.5 862.5 390.1Z" fill="#dcdcdc"/><circle cx="866.7" cy="389.90000000000003" r="1.9" fill="#484848"/><circle cx="866.1" cy="389.20000000000005" r="0.7" fill="#eee"/><path d="M862.5 412.7Q866.7 408.09999999999997 870.9000000000001 412.7Q866.7 417.09999999999997 862.5 412.7Z" fill="#dcdcdc"/><circle cx="866.7" cy="412.5" r="1.9" fill="#484848"/><circle cx="866.1" cy="411.8" r="0.7" fill="#eee"/><path transform="translate(2.7,-0.3)" d="M970.5 416.5V412.2H971.6V411A1.7 1.7 0 0 1 975 411V412.2H976.1V416.5Z" fill="none" stroke="#dcdcdc" stroke-width="0.9"/><rect x="975.5" y="413.2" width="1" height="1.6"/></g></svg>
<div class="abs" style="left:858px;top:528px;width:139px;height:10px;background:#535353;border-top:1px solid #3a3a3a"></div>
<svg class="abs" style="left:858px;top:528px" width="139" height="10" viewBox="858 528 139 10"><g fill="#dcdcdc">
<rect x="879.5" y="531.5" width="4.5" height="3" rx="1.5" fill="none" stroke="#aaa" stroke-width="0.9"/><rect x="883" y="531.5" width="4.5" height="3" rx="1.5" fill="none" stroke="#aaa" stroke-width="0.9"/>
<rect x="911" y="530" width="7.5" height="6.5"/><circle cx="914.7" cy="533.2" r="1.8" fill="#444"/>
<circle cx="930" cy="533" r="3.2" fill="none" stroke="#dcdcdc" stroke-width="1"/><path d="M927.7 535.3A3.2 3.2 0 0 1 932.3 530.7Z"/><rect x="934.5" y="536" width="1.2" height="1.2"/>
<path d="M942 529.7H945L946 530.8H950.3V536.5H942Z"/>
<path d="M958 530H965V536.5H958Z"/><path d="M958 533.5H961V536.5H958Z" fill="#535353"/><path d="M958 533.5L961 536.5" stroke="#dcdcdc" stroke-width="0.8"/>
<path d="M973.5 531.5H980L979.3 537H974.2Z"/><rect x="973" y="530.3" width="7.5" height="1"/><rect x="975.5" y="529.3" width="2.5" height="1"/>
<rect x="904.5" y="536" width="1.2" height="1.2"/>
</g></svg>
<div class="t" style="left:896.5px;top:528.5px;font-family:'Liberation Serif',serif;font-style:italic;font-size:8.5px;color:#e0e0e0">fx</div>
<!--RIGHT-->
<div class="t" style="left:30.5px;top:531px;font-size:6.7px;color:#eee">12.5%</div>
<div class="abs" style="left:52px;top:529.5px;width:1px;height:8.5px;background:#3a3a3a"></div>
<svg class="abs" style="left:55px;top:531px" width="12" height="7" viewBox="0 0 12 7"><rect x="0.5" y="0.5" width="11" height="6" rx="1" fill="#ddd"/><circle cx="4" cy="3.5" r="2" fill="#333"/><rect x="7.5" y="2" width="2.5" height="2" fill="#333"/></svg>
<div class="t" style="left:89.5px;top:531px;font-size:6.8px;color:#eee">文档:70.4M/90.5M</div>
<div class="abs" style="left:168px;top:531.5px;border:2.7px solid transparent;border-left:4px solid #eee;border-right:0"></div>
<div class="abs" style="left:174px;top:529.3px;width:650.5px;height:8.7px;background:#3c3c3c"></div>
<div id="vscroll" class="abs"></div>
<!--STATUS-->
<svg id="baidu" class="abs" style="left:740px;top:425px;opacity:.76" width="260" height="105" viewBox="740 425 260 105">
<g fill="#fff" font-family="'Liberation Sans','Noto Sans CJK SC',sans-serif">
<text transform="translate(766.7,489) scale(1.02,1)" font-size="38.5" font-weight="bold" stroke="#fff" stroke-width="1.4" stroke-linejoin="round">Bai</text>
<ellipse cx="835.6" cy="456.4" rx="6.3" ry="8.8" transform="rotate(-10 835.6 456.4)"/>
<ellipse cx="848.2" cy="443.8" rx="6.3" ry="9"/>
<ellipse cx="863.8" cy="445" rx="6.5" ry="8.7"/>
<ellipse cx="873.7" cy="460" rx="6.1" ry="8.4" transform="rotate(10 873.7 460)"/>
<path d="M856 458C861.5 458 864 463 868 468C872 472.5 877.8 475 877.8 481.5C877.8 488 873.5 490.8 868.5 490.6C863.5 490.4 860.5 489.2 856 489.2C851.5 489.2 848 490.4 842.5 490.6C837 490.8 832.4 488 832.6 481.5C832.8 475 838.5 472.5 843 468C847.5 463 850.5 458 856 458Z"/>
<text x="838" y="484.9" font-size="24.4" font-weight="bold" fill="#3d3d3d" letter-spacing="-0.2">du</text>
<text x="882.8" y="487.1" font-size="29" font-weight="900" letter-spacing="2.4" font-family="'Noto Sans CJK SC',sans-serif">经验</text>
<text transform="scale(1.05,1)" x="732.22 739.08 745.74 758.50 770.24 780.88 792.41 801.03 806.08 818.30 829.55 834.97 847.22 857.98 863.73 873.73 884.70" y="513" font-size="21.2" stroke="#fff" stroke-width="0.45">jingyan.baidu.com</text>
</g>
</svg>
<!--BAIDU-->
<div id="bottomedge" class="abs"></div>
<div id="leftedge" class="abs"></div>
<div id="rightedge" class="abs"></div>
</div>
</body>
</html>
